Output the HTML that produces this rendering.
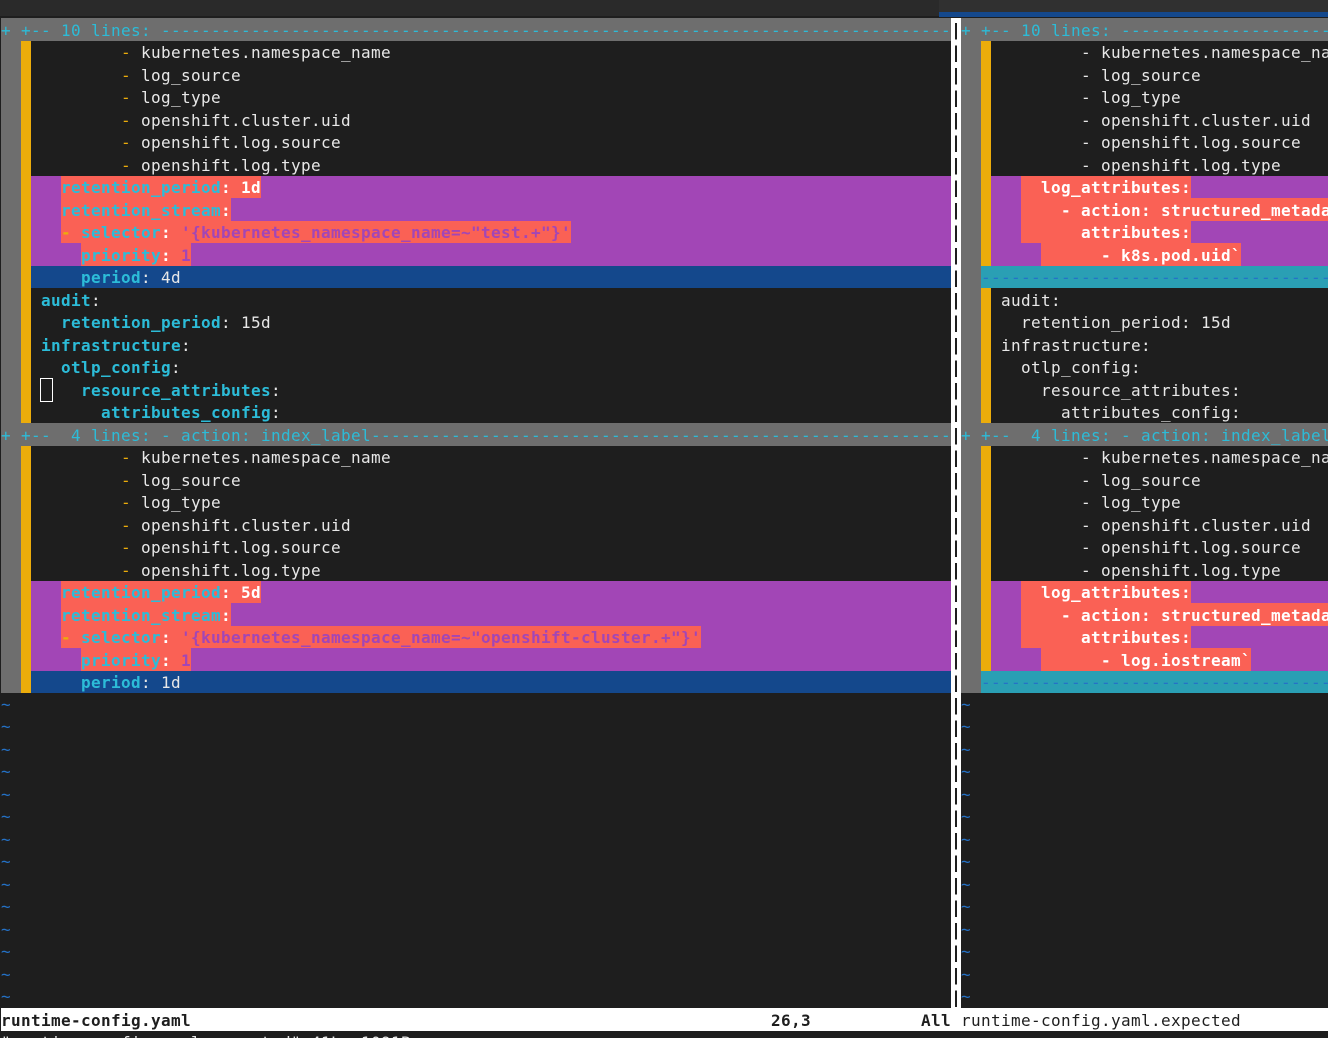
<!DOCTYPE html>
<html><head><meta charset="utf-8"><style>
html,body{margin:0;padding:0;background:#1e1e1e;width:1328px;height:1038px;overflow:hidden}
#w{position:relative;width:1328px;height:1038px;overflow:hidden;font:16px/24.5px "DejaVu Sans Mono","Liberation Mono",monospace;letter-spacing:.3672px;color:#e8e8e8}
.a{position:absolute}
.r{position:absolute;height:22.5px;white-space:pre;overflow:hidden;left:1px;width:950px;line-height:25.5px}
.r[style*=".5px"]{line-height:24.5px}
.st{line-height:25.5px}
.R{left:961px;width:367px}
.f{background:#6e6e6e;color:#2cbcd8}
.rp{background:#a246b6}.rb{background:#14488c}
.g,.y,.d,.t{display:inline-block;height:22.5px;vertical-align:top}
.g{background:#6e6e6e}.y{background:#ebac0b}.d{background:#fa6155;font-weight:bold;color:#fff}
.t{background:#2a9fb4;color:#2472c8}
.c{color:#2cbcd8;font-weight:bold}.o{color:#ebac0b}.m{color:#a246b6}
.n{font-weight:normal;color:#e8e8e8}
.x{color:#2472c8;line-height:22.5px}
</style></head><body><div id="w">
<div class="a" style="left:0;top:0;width:939px;height:16px;background:#2a2a2a"></div>
<div class="a" style="left:939px;top:0;width:389px;height:12px;background:#303030"></div>
<div class="a" style="left:939px;top:12px;width:389px;height:5px;background:#14488c"></div>

<div class="r f" style="top:18px">+ +-- 10 lines: -----------------------------------------------------------------------------------------------</div>
<div class="r" style="top:40.5px"><span class="g">  </span><span class="y"> </span>         <span class="o">-</span> kubernetes.namespace_name</div>
<div class="r" style="top:63px"><span class="g">  </span><span class="y"> </span>         <span class="o">-</span> log_source</div>
<div class="r" style="top:85.5px"><span class="g">  </span><span class="y"> </span>         <span class="o">-</span> log_type</div>
<div class="r" style="top:108px"><span class="g">  </span><span class="y"> </span>         <span class="o">-</span> openshift.cluster.uid</div>
<div class="r" style="top:130.5px"><span class="g">  </span><span class="y"> </span>         <span class="o">-</span> openshift.log.source</div>
<div class="r" style="top:153px"><span class="g">  </span><span class="y"> </span>         <span class="o">-</span> openshift.log.type</div>
<div class="r rp" style="top:175.5px"><span class="g">  </span><span class="y"> </span>   <span class="d"><span class="c">retention_period</span>: 1d</span></div>
<div class="r rp" style="top:198px"><span class="g">  </span><span class="y"> </span>   <span class="d"><span class="c">retention_stream</span>:</span></div>
<div class="r rp" style="top:220.5px"><span class="g">  </span><span class="y"> </span>   <span class="d"><span class="o">-</span> <span class="c">selector</span>: <span class="m">'{kubernetes_namespace_name=~"test.+"}'</span></span></div>
<div class="r rp" style="top:243px"><span class="g">  </span><span class="y"> </span>     <span class="d"><span class="c">priority</span>: <span class="m">1</span></span></div>
<div class="r rb" style="top:265.5px"><span class="g">  </span><span class="y"> </span>     <span class="c">period</span>: 4d</div>
<div class="r" style="top:288px"><span class="g">  </span><span class="y"> </span> <span class="c">audit</span>:</div>
<div class="r" style="top:310.5px"><span class="g">  </span><span class="y"> </span>   <span class="c">retention_period</span>: 15d</div>
<div class="r" style="top:333px"><span class="g">  </span><span class="y"> </span> <span class="c">infrastructure</span>:</div>
<div class="r" style="top:355.5px"><span class="g">  </span><span class="y"> </span>   <span class="c">otlp_config</span>:</div>
<div class="r" style="top:378px"><span class="g">  </span><span class="y"> </span>     <span class="c">resource_attributes</span>:</div>
<div class="r" style="top:400.5px"><span class="g">  </span><span class="y"> </span>       <span class="c">attributes_config</span>:</div>
<div class="a" style="left:40px;top:378px;width:11px;height:22px;border:1px solid #fff"></div>
<div class="r f" style="top:423px">+ +--  4 lines: - action: index_label-----------------------------------------------------------------------------</div>
<div class="r" style="top:445.5px"><span class="g">  </span><span class="y"> </span>         <span class="o">-</span> kubernetes.namespace_name</div>
<div class="r" style="top:468px"><span class="g">  </span><span class="y"> </span>         <span class="o">-</span> log_source</div>
<div class="r" style="top:490.5px"><span class="g">  </span><span class="y"> </span>         <span class="o">-</span> log_type</div>
<div class="r" style="top:513px"><span class="g">  </span><span class="y"> </span>         <span class="o">-</span> openshift.cluster.uid</div>
<div class="r" style="top:535.5px"><span class="g">  </span><span class="y"> </span>         <span class="o">-</span> openshift.log.source</div>
<div class="r" style="top:558px"><span class="g">  </span><span class="y"> </span>         <span class="o">-</span> openshift.log.type</div>
<div class="r rp" style="top:580.5px"><span class="g">  </span><span class="y"> </span>   <span class="d"><span class="c">retention_period</span>: 5d</span></div>
<div class="r rp" style="top:603px"><span class="g">  </span><span class="y"> </span>   <span class="d"><span class="c">retention_stream</span>:</span></div>
<div class="r rp" style="top:625.5px"><span class="g">  </span><span class="y"> </span>   <span class="d"><span class="o">-</span> <span class="c">selector</span>: <span class="m">'{kubernetes_namespace_name=~"openshift-cluster.+"}'</span></span></div>
<div class="r rp" style="top:648px"><span class="g">  </span><span class="y"> </span>     <span class="d"><span class="c">priority</span>: <span class="m">1</span></span></div>
<div class="r rb" style="top:670.5px"><span class="g">  </span><span class="y"> </span>     <span class="c">period</span>: 1d</div>

<div class="a x" style="left:1px;top:693.5px;white-space:pre">~
~
~
~
~
~
~
~
~
~
~
~
~
~</div>

<div class="a" style="left:951px;top:18px;width:10px;height:990px;background:#fff"></div>
<div class="a" style="left:955px;top:18px;width:2px;height:990px;background:repeating-linear-gradient(to bottom,#fff 0,#fff 5px,#1e1e1e 5px,#1e1e1e 21.5px,#fff 21.5px,#fff 22.5px)"></div>

<div class="r R f" style="top:18px">+ +-- 10 lines: -----------------------------------</div>
<div class="r R" style="top:40.5px"><span class="g">  </span><span class="y"> </span>         - kubernetes.namespace_name</div>
<div class="r R" style="top:63px"><span class="g">  </span><span class="y"> </span>         - log_source</div>
<div class="r R" style="top:85.5px"><span class="g">  </span><span class="y"> </span>         - log_type</div>
<div class="r R" style="top:108px"><span class="g">  </span><span class="y"> </span>         - openshift.cluster.uid</div>
<div class="r R" style="top:130.5px"><span class="g">  </span><span class="y"> </span>         - openshift.log.source</div>
<div class="r R" style="top:153px"><span class="g">  </span><span class="y"> </span>         - openshift.log.type</div>
<div class="r R rp" style="top:175.5px"><span class="g">  </span><span class="y"> </span>   <span class="d">  log_attributes:</span></div>
<div class="r R rp" style="top:198px"><span class="g">  </span><span class="y"> </span>   <span class="d">    - action: structured_metadata</span></div>
<div class="r R rp" style="top:220.5px"><span class="g">  </span><span class="y"> </span>   <span class="d">      attributes:</span></div>
<div class="r R rp" style="top:243px"><span class="g">  </span><span class="y"> </span>     <span class="d">      - k8s.pod.uid`</span></div>
<div class="r R" style="top:265.5px"><span class="g">  </span><span class="t">-----------------------------------</span></div>
<div class="r R" style="top:288px"><span class="g">  </span><span class="y"> </span> audit:</div>
<div class="r R" style="top:310.5px"><span class="g">  </span><span class="y"> </span>   retention_period: 15d</div>
<div class="r R" style="top:333px"><span class="g">  </span><span class="y"> </span> infrastructure:</div>
<div class="r R" style="top:355.5px"><span class="g">  </span><span class="y"> </span>   otlp_config:</div>
<div class="r R" style="top:378px"><span class="g">  </span><span class="y"> </span>     resource_attributes:</div>
<div class="r R" style="top:400.5px"><span class="g">  </span><span class="y"> </span>       attributes_config:</div>
<div class="r R f" style="top:423px">+ +--  4 lines: - action: index_label-------------</div>
<div class="r R" style="top:445.5px"><span class="g">  </span><span class="y"> </span>         - kubernetes.namespace_name</div>
<div class="r R" style="top:468px"><span class="g">  </span><span class="y"> </span>         - log_source</div>
<div class="r R" style="top:490.5px"><span class="g">  </span><span class="y"> </span>         - log_type</div>
<div class="r R" style="top:513px"><span class="g">  </span><span class="y"> </span>         - openshift.cluster.uid</div>
<div class="r R" style="top:535.5px"><span class="g">  </span><span class="y"> </span>         - openshift.log.source</div>
<div class="r R" style="top:558px"><span class="g">  </span><span class="y"> </span>         - openshift.log.type</div>
<div class="r R rp" style="top:580.5px"><span class="g">  </span><span class="y"> </span>   <span class="d">  log_attributes:</span></div>
<div class="r R rp" style="top:603px"><span class="g">  </span><span class="y"> </span>   <span class="d">    - action: structured_metadata</span></div>
<div class="r R rp" style="top:625.5px"><span class="g">  </span><span class="y"> </span>   <span class="d">      attributes:</span></div>
<div class="r R rp" style="top:648px"><span class="g">  </span><span class="y"> </span>     <span class="d">      - log.iostream`</span></div>
<div class="r R" style="top:670.5px"><span class="g">  </span><span class="t">-----------------------------------</span></div>

<div class="a x" style="left:961px;top:693.5px;white-space:pre">~
~
~
~
~
~
~
~
~
~
~
~
~
~</div>

<div class="a" style="left:1px;top:1008px;width:1327px;height:22.5px;background:#fff"></div>
<div class="a st" style="left:1px;top:1008px;white-space:pre;color:#1e1e1e;font-weight:bold">runtime-config.yaml</div>
<div class="a st" style="left:771px;top:1008px;white-space:pre;color:#1e1e1e;font-weight:bold">26,3</div>
<div class="a st" style="left:921px;top:1008px;white-space:pre;color:#1e1e1e;font-weight:bold">All</div>
<div class="a st" style="left:961px;top:1008px;white-space:pre;color:#1e1e1e">runtime-config.yaml.expected</div>
<div class="a" style="left:1px;top:1030.5px;white-space:pre">"runtime-config.yaml.expected" 41L, 1091B</div>
</div></body></html>
